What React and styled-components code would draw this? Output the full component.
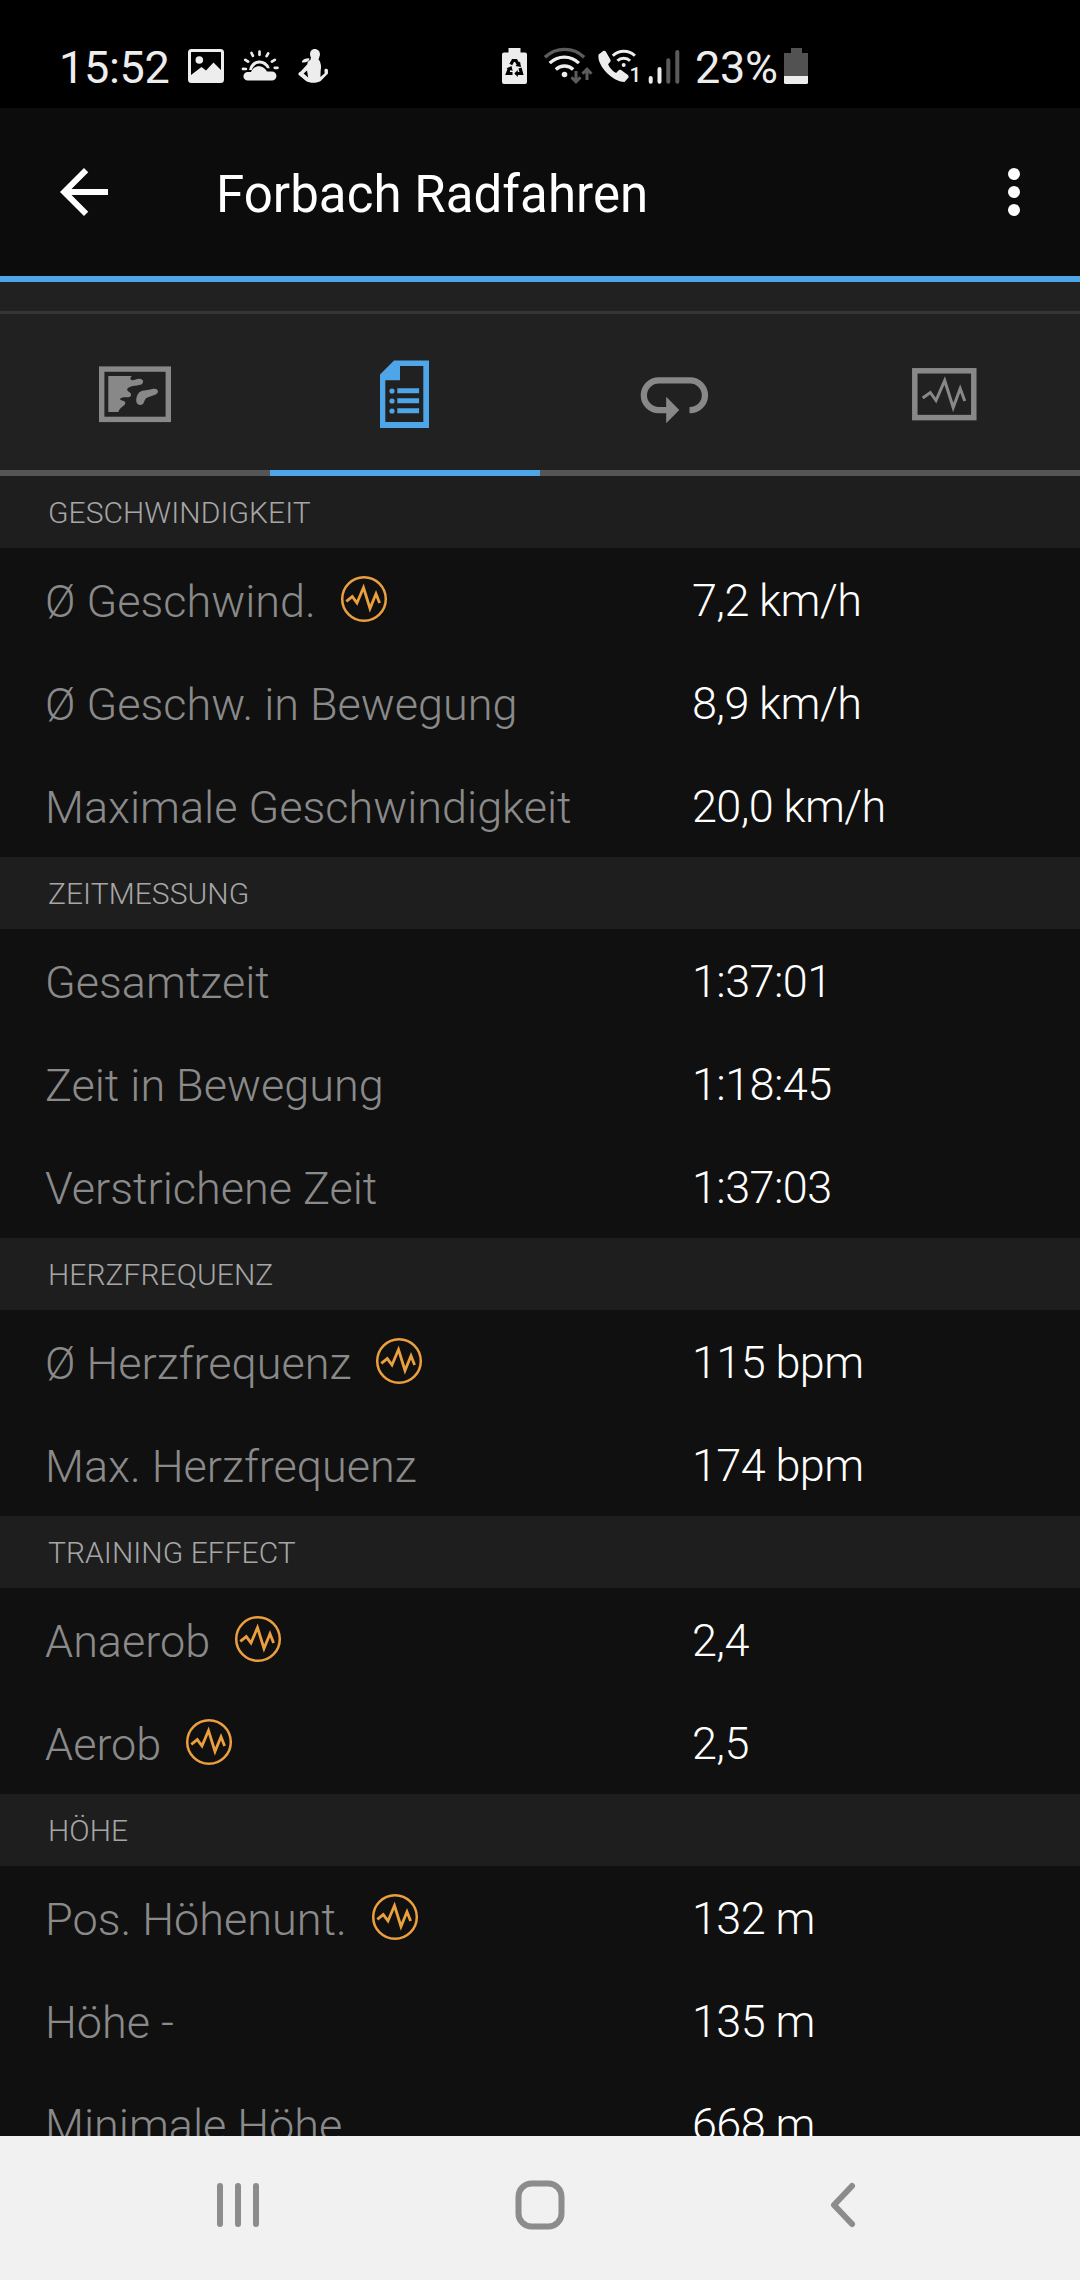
/**
*
* App
*
*/

import React from 'react';
import styled, { createGlobalStyle } from 'styled-components';

const GlobalStyle = createGlobalStyle`
  body {
    margin: 0;
    background: #101010;
    font-family: Roboto, sans-serif;
  }
`;

const Screen = styled.div`
  display: flex;
  flex-direction: column;
  width: 1080px;
  height: 2280px;
  overflow: hidden;
`;

const StatusBar = styled.div`
  display: flex;
  flex: none;
  justify-content: space-between;
  box-sizing: border-box;
  height: 108px;
  padding: 44px 271px 0 59px;
  background: #000;
  color: #ededed;
`;

const StatusGroup = styled.div`
  display: flex;
  align-items: flex-start;
`;

const StatusText = styled.span`
  width: ${props => props.width}px;
  font-size: 45px;
  letter-spacing: -0.3px;
  line-height: 47px;
  white-space: nowrap;
`;

const StatusIcon = styled.svg`
  display: block;
  flex: none;
  height: 44px;
  margin-left: ${props => props.$gap || 0}px;
`;

const Header = styled.header`
  display: flex;
  flex: none;
  align-items: center;
  box-sizing: border-box;
  height: 174px;
  padding: 0 30px 0 48px;
  border-bottom: 6px solid #4ea5e8;
  background: #0c0c0c;
`;

const HeaderIcon = styled.svg`
  display: block;
  width: 72px;
  height: 72px;
  fill: #fff;
`;

const Title = styled.h1`
  flex: 1;
  margin: 6px 0 0 96px;
  color: #fff;
  font-size: 51px;
  font-weight: 400;
  letter-spacing: 0.05px;
  line-height: 60px;
`;

const Strip = styled.div`
  flex: none;
  height: 29px;
  border-bottom: 3px solid #353535;
  background: #212121;
`;

const Tabs = styled.nav`
  display: flex;
  flex: none;
  height: 162px;
  background: #212121;
`;

const Tab = styled.div`
  display: flex;
  flex: 1;
  justify-content: center;
  box-sizing: border-box;
  padding-top: 35px;
  border-bottom: 6px solid ${props => (props.$active ? '#4ea5e8' : '#555')};
  color: ${props => (props.$active ? '#4ea5e8' : '#888')};

  svg {
    width: 90px;
    height: 90px;
  }
`;

const Content = styled.main`
  flex: 1;
  min-height: 0;
  overflow: hidden;
  background: #101010;
`;

const SectionTitle = styled.h2`
  height: 72px;
  margin: 0;
  padding-left: 48px;
  background: #1e1e1e;
  color: #a6a6a6;
  font-size: 30px;
  font-weight: 300;
  letter-spacing: 0.05px;
  line-height: 73px;
`;

const Row = styled.div`
  display: grid;
  grid-template-columns: 647px 1fr;
  height: 103px;
  padding-left: 45px;
  font-size: 45px;
  font-weight: 300;
  line-height: 107px;
`;

const Label = styled.div`
  display: flex;
  color: #8a8a8a;
`;

const Value = styled.div`
  color: #fff;
  letter-spacing: -0.6px;
  line-height: 106px;
`;

const Badge = styled.svg`
  display: block;
  width: 48px;
  height: 48px;
  margin: 27px 0 0 24px;
`;

const NavBar = styled.footer`
  display: flex;
  flex: none;
  align-items: center;
  justify-content: space-between;
  box-sizing: border-box;
  height: 144px;
  padding: 0 208px;
  background: #f1f1f1;

  svg {
    width: 60px;
    height: 60px;
    margin-top: -6px;
    fill: none;
    stroke: #8c8c8c;
    stroke-width: 6;
  }
`;

const sections = [
  {
    title: 'GESCHWINDIGKEIT',
    rows: [
      { label: 'Ø Geschwind.', value: '7,2 km/h', chart: true },
      { label: 'Ø Geschw. in Bewegung', value: '8,9 km/h' },
      { label: 'Maximale Geschwindigkeit', value: '20,0 km/h' },
    ],
  },
  {
    title: 'ZEITMESSUNG',
    rows: [
      { label: 'Gesamtzeit', value: '1:37:01' },
      { label: 'Zeit in Bewegung', value: '1:18:45' },
      { label: 'Verstrichene Zeit', value: '1:37:03' },
    ],
  },
  {
    title: 'HERZFREQUENZ',
    rows: [
      { label: 'Ø Herzfrequenz', value: '115 bpm', chart: true },
      { label: 'Max. Herzfrequenz', value: '174 bpm' },
    ],
  },
  {
    title: 'TRAINING EFFECT',
    rows: [
      { label: 'Anaerob', value: '2,4', chart: true },
      { label: 'Aerob', value: '2,5', chart: true },
    ],
  },
  {
    title: 'HÖHE',
    rows: [
      { label: 'Pos. Höhenunt.', value: '132 m', chart: true },
      { label: 'Höhe -', value: '135 m' },
      { label: 'Minimale Höhe', value: '668 m' },
    ],
  },
];

const ChartBadge = () => (
  <Badge viewBox="0 0 48 48" fill="none" stroke="#eb9f3d">
    <circle cx="24" cy="24" r="21.8" strokeWidth="2.5" />
    <path d="M6.3 26.3 12.3 21.6 17 28 23.5 12.5 30 33.5 36 18.8 39.6 28" strokeWidth="2.8" />
  </Badge>
);

const PictureIcon = () => (
  <StatusIcon width="36" viewBox="188 44 36 44" $gap={13}>
    <rect x="189.5" y="50.5" width="33" height="31" rx="2" fill="none" stroke="#ededed" strokeWidth="3" />
    <circle cx="199.3" cy="60" r="3.8" fill="#ededed" />
    <path d="M191 75 201.5 67 206 70.5 213.5 62.5 222 71V81H191Z" fill="#ededed" />
  </StatusIcon>
);

const WeatherIcon = () => (
  <StatusIcon width="38" viewBox="241 44 38 44" $gap={17}>
    <path d="M247.7 80.6a4.3 4.3 0 0 1 0-8.6h3.2c2-4.8 6.2-6.7 10-5.5 3 .9 4.8 2.700 6 5h5a4.5 4.5 0 0 1 0 9.1Z" fill="#ededed" />
    <path d="M249 70a10.600 10.600 0 0 1 20.800-1.700h-2.600c-4-6.400-12.500-6.900-15.500 1.700Z" fill="#ededed" />
    <path
      d="M259.5 51.5v3.300M251.5 53l1.400 2.900M268.2 53.300l-1.600 2.800M245.300 59.800l2.800 1.800M274.800 59.800l-2.900 1.800M243 68.800l2.900.2M274.800 67.800h2.700"
      stroke="#ededed"
      strokeWidth="2.7"
      strokeLinecap="round"
    />
  </StatusIcon>
);

const RunnerIcon = () => (
  <StatusIcon width="32" viewBox="299 44 32 44" $gap={19}>
    <path
      d="M315.5 49c4 0 5.900 3 5.400 6.200l-1.400 4.300 1.200 1.500c1.500 4 1.600 6 1 9l-.3 7 4.300-3.700-.3-3.300c.4-1.700 3.200-1.800 3.500 0l.1 3.500-7.300 7.500c-4 2.400-11 2.400-15-.3l-7.200-6c-.6-1 .2-2.200 2.200-3.200l6.600-7.200c.2-2.300 1-3.600 3-4.300l.7-2.200c-2.300-4-.3-8.800 3.500-8.800Z"
      fill="#ededed"
    />
    <path d="M303.7 61.700q1.500-2.700 6-2.700-1.500 3-6 2.700Z" fill="#ededed" stroke="#ededed" strokeWidth="1.6" strokeLinejoin="round" />
    <path d="M304.600 73.500 308 70.500 309.200 77.500Z" fill="#000" />
  </StatusIcon>
);

const SaverIcon = () => (
  <StatusIcon width="25" viewBox="501.5 44 25 44">
    <path d="M508 48h12v4.500h4.500a2 2 0 0 1 2 2V82a2 2 0 0 1-2 2h-21a2 2 0 0 1-2-2V54.500a2 2 0 0 1 2-2h4.500Z" fill="#ededed" />
    <path d="M510.3 64.500 512.500 60.500H515.500L517.800 64.500M519.500 68 521 73.500H516M512 73.500H507L509 68" fill="none" stroke="#000" strokeWidth="3.2" />
    <path d="M515 66 519.500 61.500 520.500 67ZM517.300 70v7l-3.500-3.500ZM506 68.500l5-2.500 1.200 5Z" fill="#000" />
  </StatusIcon>
);

const WifiIcon = () => (
  <StatusIcon width="49" viewBox="544 44 49 44" $gap={17.5} fill="none" strokeWidth="3.3">
    <path d="M545 57.200a28.200 28.200 0 0 1 39.200 0" stroke="#5c5c5c" />
    <path d="M549.7 63.200a20.500 20.500 0 0 1 29.200 0M555.8 69.500a12.600 12.600 0 0 1 17.400 0" stroke="#ededed" />
    <circle cx="564.5" cy="74.5" r="2.8" fill="#ededed" />
    <path d="M576 71v10M571.5 77.300l4.500 4.600 4.500-4.600M587 80V70M582.500 73.800l4.500-4.600 4.500 4.600" stroke="#5c5c5c" strokeWidth="3" />
  </StatusIcon>
);

const WifiCallIcon = () => (
  <StatusIcon width="43" viewBox="597 44 43 44" $gap={4}>
    <path d="M603.2 51 598.6 54.5C596.5 64 611 81.5 624.5 82l4-4.400c.4-1.200 0-2.200-.9-2.900l-6.200-4.400c-1.100-.7-2.200-.6-3 .3l-2.300 2.500c-3.400-1.700-6.500-5.400-8-8.900l2-2.200c.7-.8.7-1.900.1-2.800L605.800 51.500c-.7-.9-1.700-1.100-2.600-.5Z" fill="#ededed" />
    <path d="M612.8 55.800a15.700 15.700 0 0 1 22.100 0M617.4 60.800a9 9 0 0 1 12.700 0" fill="none" stroke="#ededed" strokeWidth="2.9" />
    <circle cx="623.7" cy="65" r="2" fill="#ededed" />
    <text x="629.5" y="82" fill="#ededed" fontSize="20.5" fontWeight="500" fontFamily="Roboto, sans-serif">1</text>
  </StatusIcon>
);

const SignalIcon = () => (
  <StatusIcon width="32" viewBox="648 44 32 44" $gap={8} strokeWidth="4" strokeLinecap="round">
    <path d="M650.7 78v3.700M659.5 69v12.700" stroke="#ededed" />
    <path d="M668.3 60.300v21.400M677.3 52v29.700" stroke="#5c5c5c" />
  </StatusIcon>
);

const BatteryIcon = () => (
  <StatusIcon width="25" viewBox="784 44 25 44" $gap={7}>
    <path d="M791 48h11v5h6v23h-24V53h7Z" fill="#525252" />
    <path d="M784 76h24v6.500a1.500 1.500 0 0 1-1.500 1.500h-21a1.500 1.500 0 0 1-1.500-1.500Z" fill="#ededed" />
  </StatusIcon>
);

const MapIcon = () => (
  <svg viewBox="90 349 90 90">
    <rect x="101.7" y="369.1" width="66.6" height="50.3" fill="none" stroke="currentColor" strokeWidth="5.4" />
    <path d="M108.3 376h23.500c-1.700 1.500-2 3.200-.3 4 2.200.9 4.500-1.200 7.500-1.300 5-.1 5.500 4.800 1.500 6-3.800 1.100-12 1-13.300 4.500-.6 2.100 3.800 2.600 3.900 5.300.1 3.200-3.500 2.900-6.600 2.800-2.800-.1-4.700 1.200-4.300 2.300.6 1.300 5 .9 5.100 3.200.1 3.300-5.800 4.300-6.800 9.200h-10.200Z" fill="currentColor" />
    <path d="M136.2 400.500c.2-5.800 2.800-9.700 7.800-10.100 5.200-.3 7.300-1.400 10.500-1.600 4.200-.1 4.600 4.400 1.200 5.700l-8.200 3c-3.200 1.300-2.900 4.700-4.400 6.300-2.600 2.500-7 .9-6.900-3.300Z" fill="currentColor" />
  </svg>
);

const ListIcon = () => (
  <svg viewBox="360 349 90 90" fill="currentColor">
    <path d="M394 360.500h35V428h-49V374.500ZM400 366v14.300h-14.700V422h38V366Z" fillRule="evenodd" />
    <path d="M397.3 388.300h21.800v5h-21.800ZM397.3 398.300h21.800v5h-21.800ZM397.3 408.300h21.800v5h-21.800Z" />
    <circle cx="392" cy="391" r="2.6" />
    <circle cx="392" cy="401" r="2.6" />
    <circle cx="392" cy="411" r="2.6" />
  </svg>
);

const LapIcon = () => (
  <svg viewBox="630 349 90 90">
    <path d="M667 410.200h-8.200a14.900 14.900 0 0 1 0-29.900h31.200a14.900 14.900 0 0 1 0 29.900h-.5" fill="none" stroke="currentColor" strokeWidth="6.3" />
    <path d="M666.2 396.700 679.3 410 666.2 423.200Z" fill="currentColor" />
  </svg>
);

const GraphIcon = () => (
  <svg viewBox="900 349 90 90" fill="none" stroke="currentColor">
    <rect x="914.8" y="370.8" width="59" height="46.8" strokeWidth="5.5" />
    <path d="M922.7 398 930.3 392.5 936 400.5 944.7 380.5 953.2 407.5 960.2 388.5 964.8 401" strokeWidth="3" />
  </svg>
);

const tabs = [
  { name: 'map', Icon: MapIcon },
  { name: 'details', Icon: ListIcon },
  { name: 'laps', Icon: LapIcon },
  { name: 'graph', Icon: GraphIcon },
];

const App = () => {
  return (
    <Screen>
      <GlobalStyle />
      <StatusBar>
        <StatusGroup>
          <StatusText width={116}>15:52</StatusText>
          <PictureIcon />
          <WeatherIcon />
          <RunnerIcon />
        </StatusGroup>
        <StatusGroup>
          <SaverIcon />
          <WifiIcon />
          <WifiCallIcon />
          <SignalIcon />
          <StatusIcon width="15" />
          <StatusText width={82}>23%</StatusText>
          <BatteryIcon />
        </StatusGroup>
      </StatusBar>
      <Header>
        <HeaderIcon viewBox="0 0 24 24">
          <path d="M20 11H7.83l5.590-5.590L12 4l-8 8 8 8 1.410-1.410L7.83 13H20v-2z" />
        </HeaderIcon>
        <Title>Forbach Radfahren</Title>
        <HeaderIcon viewBox="0 0 24 24">
          <circle cx="12" cy="6" r="2" />
          <circle cx="12" cy="12" r="2" />
          <circle cx="12" cy="18" r="2" />
        </HeaderIcon>
      </Header>
      <Strip />
      <Tabs>
        {tabs.map(({ name, Icon }) => (
          <Tab key={name} $active={name === 'details'}>
            <Icon />
          </Tab>
        ))}
      </Tabs>
      <Content>
        {sections.map(section => (
          <section key={section.title}>
            <SectionTitle>{section.title}</SectionTitle>
            {section.rows.map(row => (
              <Row key={row.label}>
                <Label>
                  {row.label}
                  {row.chart && <ChartBadge />}
                </Label>
                <Value>{row.value}</Value>
              </Row>
            ))}
          </section>
        ))}
      </Content>
      <NavBar>
        <svg viewBox="0 0 60 60" strokeLinecap="round">
          <path d="M12 11v38M30 11v38M48 11v38" />
        </svg>
        <svg viewBox="0 0 60 60">
          <rect x="8.5" y="8.5" width="43" height="43" rx="13" />
        </svg>
        <svg viewBox="0 0 60 60" strokeLinecap="round" strokeLinejoin="round">
          <path d="M40 11 22 30 40 49" />
        </svg>
      </NavBar>
    </Screen>
  );
}

export default App;
